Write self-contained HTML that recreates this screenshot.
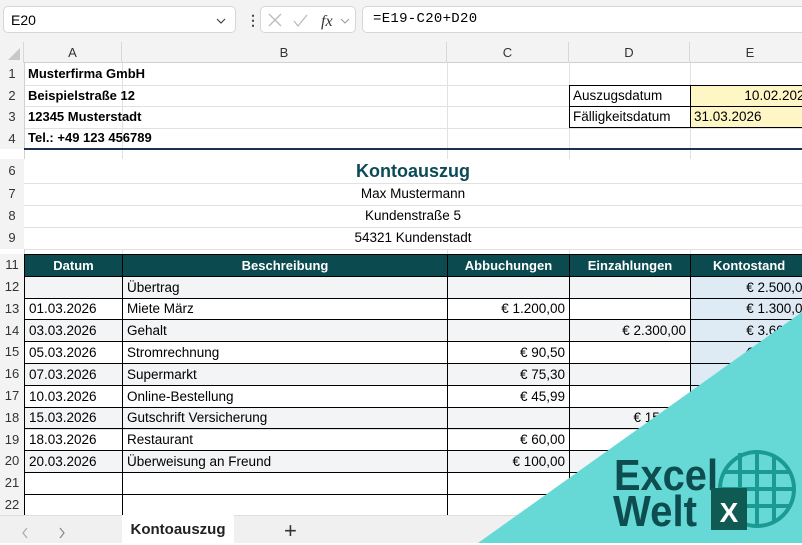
<!DOCTYPE html>
<html><head><meta charset="utf-8"><style>
*{margin:0;padding:0;box-sizing:border-box}
body{width:802px;height:543px;overflow:hidden;background:#fff;font-family:"Liberation Sans",sans-serif;position:relative;color:#000}
.bar{position:absolute;top:0;left:0;width:802px;height:42px;background:#f3f3f3}
.box{position:absolute;background:#fff;border:1px solid #d6d6d6;border-radius:5px;height:27px;top:6px}
.colhdr{position:absolute;top:42px;left:0;width:802px;height:21px;background:#f3f3f3;border-bottom:1px solid #d0d0d0}
.ch{position:absolute;top:0;height:21px;line-height:21px;text-align:center;font-size:13px;color:#333;border-right:1px solid #d8d8d8}
.rh{position:absolute;left:0;width:24px;text-align:center;font-size:13px;color:#333;background:#f3f3f3}
.c{position:absolute;font-size:13.5px;white-space:nowrap;overflow:hidden;padding:0 4px}
.hl{position:absolute;height:1px;background:#e1e1e1}
.vl{position:absolute;width:1px;background:#e1e1e1}
</style></head><body>
<div class="bar"></div>
<div class="box" style="left:3px;width:233px"><span style="position:absolute;left:7px;top:5px;font-size:14px">E20</span><svg width="12" height="8" style="position:absolute;right:8px;top:10px"><path d="M2 2l4 4 4-4" stroke="#444" stroke-width="1.2" fill="none"/></svg></div>
<div style="position:absolute;left:246px;top:12px;font-size:14px;color:#444;font-weight:bold">&#8942;</div>
<div class="box" style="left:260px;width:96px"><svg width="96" height="27" style="position:absolute;left:0;top:0"><path d="M8 7l12 12M20 7L8 19" stroke="#bbb" stroke-width="1.3" fill="none"/><path d="M33 14l4 5 9-11" stroke="#bbb" stroke-width="1.3" fill="none"/><text x="60" y="19" font-family="Liberation Serif" font-style="italic" font-size="16" fill="#333">fx</text><path d="M80 12l4 4 4-4" stroke="#999" stroke-width="1" fill="none"/></svg></div>
<div class="box" style="left:362px;width:445px"><span style="position:absolute;left:10px;top:4px;font-size:14px;font-family:'Liberation Mono',monospace;letter-spacing:.3px">=E19-C20+D20</span></div>
<div class="colhdr">
<div class="ch" style="left:0;width:24px;background:#f3f3f3"><svg width="24" height="21"><path d="M20 6v12H8z" fill="#c8c8c8"/></svg></div>
<div class="ch" style="left:24px;width:98px">A</div>
<div class="ch" style="left:122px;width:325px">B</div>
<div class="ch" style="left:447px;width:122px">C</div>
<div class="ch" style="left:569px;width:121px">D</div>
<div class="ch" style="left:690px;width:120px;border-right:0">E</div>
</div>
<div id="g"></div>
<script>
var rows=[[1,63,22],[2,85,21],[3,106,22],[4,128,21],[5,149,10],[6,159,24],[7,183,22],[8,205,22],[9,227,22],[10,249,5],[11,254,22]];
var y=276;for(var i=12;i<=22;i++){rows.push([i,y,21.8]);y+=21.8;}
var h='';
rows.forEach(function(r){var n=r[0],t=r[1],hh=r[2];
 if(n!=10&&n!=5)h+='<div class="rh" style="top:'+t+'px;height:'+hh+'px;line-height:'+hh+'px">'+n+'</div>';
 h+='<div class="hl" style="left:24px;width:778px;top:'+(t+hh)+'px"></div>';
});
[122,447,569,690].forEach(function(x){h+='<div class="vl" style="left:'+x+'px;top:63px;height:452px"></div>';});
h+='<div class="vl" style="left:24px;top:63px;height:452px;background:#d0d0d0"></div>';
document.getElementById('g').innerHTML=h;
</script>
<div style="position:absolute;left:24px;top:159px;width:778px;height:90px;background:#fff"></div>
<div class="hl" style="left:24px;width:778px;top:183px"></div>
<div class="hl" style="left:24px;width:778px;top:205px"></div>
<div class="hl" style="left:24px;width:778px;top:227px"></div>
<div style="position:absolute;left:24px;top:148px;width:778px;height:2px;background:#1f2f4f"></div>
<div class="c" style="left:24px;top:63px;height:22px;line-height:22px;font-weight:bold;font-size:13px">Musterfirma GmbH</div>
<div class="c" style="left:24px;top:85px;height:21px;line-height:21px;font-weight:bold;font-size:13px">Beispielstraße 12</div>
<div class="c" style="left:24px;top:106px;height:22px;line-height:22px;font-weight:bold;font-size:13px">12345 Musterstadt</div>
<div class="c" style="left:24px;top:128px;height:20px;line-height:20px;font-weight:bold;font-size:13px">Tel.: +49 123 456789</div>
<div style="position:absolute;left:569px;top:85px;width:233px;height:43px;border:1px solid #000;border-right:0"></div>
<div style="position:absolute;left:690px;top:85px;width:112px;height:43px;background:#fff6c6;border-left:1px solid #000;border-top:1px solid #000;border-bottom:1px solid #000"></div>
<div style="position:absolute;left:569px;top:106px;width:233px;height:1px;background:#000"></div>
<div class="c" style="left:569px;top:85px;height:21px;line-height:21px">Auszugsdatum</div>
<div class="c" style="left:569px;top:106px;height:22px;line-height:22px">Fälligkeitsdatum</div>
<div class="c" style="left:690px;top:85px;width:122px;height:21px;line-height:21px;text-align:right;padding-right:0">10.02.2026</div>
<div class="c" style="left:690px;top:106px;height:22px;line-height:22px">31.03.2026</div>
<div class="c" style="left:24px;width:778px;top:159px;height:24px;line-height:24px;text-align:center;font-weight:bold;font-size:18px;color:#0b4a58">Kontoauszug</div>
<div class="c" style="left:24px;width:778px;top:183px;height:22px;line-height:22px;text-align:center">Max Mustermann</div>
<div class="c" style="left:24px;width:778px;top:205px;height:22px;line-height:22px;text-align:center">Kundenstraße 5</div>
<div class="c" style="left:24px;width:778px;top:227px;height:22px;line-height:22px;text-align:center">54321 Kundenstadt</div>
<table style="position:absolute;left:24px;top:254px;border-collapse:collapse;table-layout:fixed;width:790px;font-size:13.5px">
<colgroup><col style="width:98px"><col style="width:325px"><col style="width:122px"><col style="width:121px"><col style="width:124px"></colgroup>
<style>td{border:1px solid #000;height:21.8px;padding:0 4px;white-space:nowrap;overflow:hidden}.r{text-align:right}.h td{background:#0b4a4f;color:#fff;font-weight:bold;text-align:center;border-color:#000;font-size:13px}.g td{background:#f3f4f6}td.e{background:#deebf5}</style>
<tr class="h"><td>Datum</td><td>Beschreibung</td><td>Abbuchungen</td><td>Einzahlungen</td><td style="text-align:left;padding-left:22px">Kontostand</td></tr>
<tr class="g"><td></td><td>Übertrag</td><td></td><td></td><td class="e r">€ 2.500,00</td></tr>
<tr><td>01.03.2026</td><td>Miete März</td><td class="r">€ 1.200,00</td><td></td><td class="e r">€ 1.300,00</td></tr>
<tr class="g"><td>03.03.2026</td><td>Gehalt</td><td></td><td class="r">€ 2.300,00</td><td class="e r">€ 3.600,00</td></tr>
<tr><td>05.03.2026</td><td>Stromrechnung</td><td class="r">€ 90,50</td><td></td><td class="e r">€ 3.509,50</td></tr>
<tr class="g"><td>07.03.2026</td><td>Supermarkt</td><td class="r">€ 75,30</td><td></td><td class="e r"></td></tr>
<tr><td>10.03.2026</td><td>Online-Bestellung</td><td class="r">€ 45,99</td><td></td><td class="e r"></td></tr>
<tr class="g"><td>15.03.2026</td><td>Gutschrift Versicherung</td><td></td><td class="r">€ 150,00</td><td class="e r"></td></tr>
<tr><td>18.03.2026</td><td>Restaurant</td><td class="r">€ 60,00</td><td></td><td class="e r"></td></tr>
<tr class="g"><td>20.03.2026</td><td>Überweisung an Freund</td><td class="r">€ 100,00</td><td></td><td class="e r"></td></tr>
<tr><td></td><td></td><td></td><td></td><td></td></tr>
<tr><td></td><td></td><td></td><td></td><td></td></tr>
</table>
<div style="position:absolute;left:0;top:515px;width:802px;height:28px;background:#f0f0f0;border-top:1px solid #ddd"></div>
<svg width="60" height="20" style="position:absolute;left:18px;top:524px"><path d="M9 4l-4 5 4 5" stroke="#aaa" stroke-width="1.2" fill="none"/><path d="M42 4l4 5-4 5" stroke="#888" stroke-width="1.2" fill="none"/></svg>
<div style="position:absolute;left:122px;top:515px;width:112px;height:28px;background:#fff;font-size:15px;font-weight:bold;line-height:30px;text-align:center;color:#222">Kontoauszug</div>
<div style="position:absolute;left:284px;top:518px;font-size:22px;color:#333">+</div>
<svg width="802" height="543" style="position:absolute;left:0;top:0">
<polygon points="802,312 802,543 478,543" fill="#66d9d6"/>
<text x="614" y="490" font-family="Liberation Sans" font-weight="bold" font-size="44" fill="#0d4d50" textLength="104" lengthAdjust="spacingAndGlyphs">Excel</text>
<text x="613" y="526" font-family="Liberation Sans" font-weight="bold" font-size="44" fill="#0d4d50" textLength="84" lengthAdjust="spacingAndGlyphs">Welt</text>
<g stroke="#1a9a90" stroke-width="4" fill="none">
<circle cx="757" cy="489" r="37"/>
<path d="M740 453v72M757 452v74M774 455v68M723 472h68M720 489h74M723 506h68"/>
</g>
<rect x="711" y="488" width="36" height="42" fill="#0f5a52"/>
<text x="729" y="522" text-anchor="middle" font-family="Liberation Sans" font-weight="bold" font-size="28" fill="#fff">X</text>
</svg>
</body></html>
